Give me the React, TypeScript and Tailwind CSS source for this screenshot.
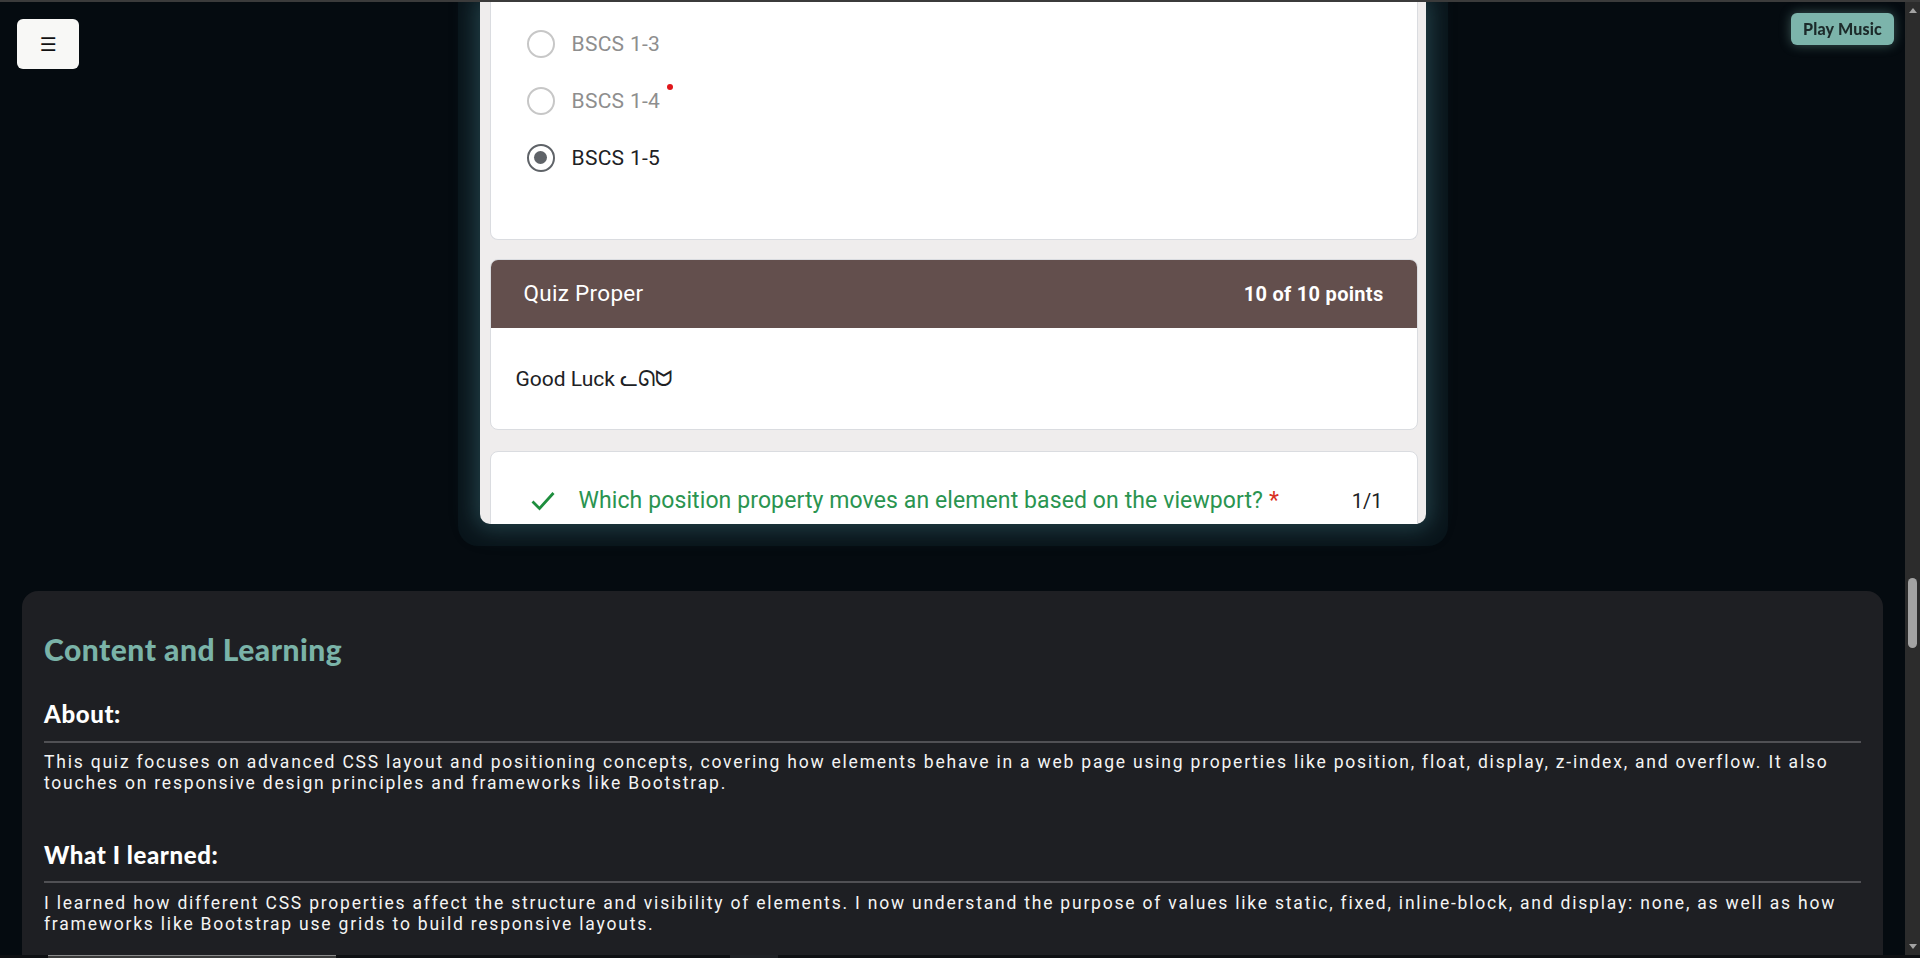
import React from "react";

function Radio({ label, selected, dot }: { label: string; selected?: boolean; dot?: boolean }) {
  return (
    <div className="flex h-[57px] items-center">
      <div
        className={
          selected
            ? "flex h-[28px] w-[28px] shrink-0 items-center justify-center rounded-full border-2 border-[#5f6368]"
            : "flex h-[28px] w-[28px] shrink-0 items-center justify-center rounded-full border-2 border-[#c7c7c7]"
        }
      >
        {selected && <div className="h-[13px] w-[13px] rounded-full bg-[#5f6368]" />}
      </div>
      <div className="ml-[17px] flex items-start">
        <span
          className={
            selected
              ? "text-[21px] leading-[28px] tracking-[0.3px] text-[#202124]"
              : "text-[21px] leading-[28px] tracking-[0.3px] text-[#8e8e8e]"
          }
        >
          {label}
        </span>
        {dot && <span className="ml-[7px] mt-[-3px] h-[6px] w-[6px] rounded-full bg-[#e0161b]" />}
      </div>
    </div>
  );
}

function QuizEmbed() {
  return (
    <div className="mx-auto w-[990px] rounded-b-[20px] bg-[#09141a] px-[22px] pb-[22px]">
      <div className="h-[522px] overflow-hidden rounded-b-[10px] bg-[#efeded] pl-[10px] pr-[8px] font-['Roboto','DejaVu_Sans',sans-serif] shadow-[0_0_22px_5px_rgba(55,100,110,0.55)]">
        <div className="rounded-b-[8px] border border-t-0 border-[#dadce0] bg-white pb-[53px] pl-[36px] pt-[13px]">
          <Radio label="BSCS 1-3" />
          <Radio label="BSCS 1-4" dot />
          <Radio label="BSCS 1-5" selected />
        </div>

        <div className="mt-[19px] overflow-hidden rounded-[8px] border border-[#dadce0] bg-white">
          <div className="flex h-[68px] items-center justify-between bg-[#634f4d] px-[33px] text-white">
            <span className="text-[22.5px] tracking-[0.3px]">Quiz Proper</span>
            <span className="text-[20px] font-bold tracking-[0.3px]">10 of 10 points</span>
          </div>
          <div className="flex h-[101px] items-center pl-[25px] pt-[3px] text-[21px] text-[#202124]">
            Good Luck ᓚᘏᗢ
          </div>
        </div>

        <div className="mt-[21px] h-[120px] rounded-t-[8px] border border-[#dadce0] bg-white pl-[40px] pr-[34px] pt-[34px]">
          <div className="flex items-center">
            <svg width="24" height="20" viewBox="0 0 24 20" className="shrink-0">
              <path d="M1.5 10.5 L8.5 17.5 L22.5 2" fill="none" stroke="#1e8e3e" strokeWidth="2.8" />
            </svg>
            <span className="ml-[24px] text-[23px] leading-[30px] tracking-[0.1px] text-[#2a9450]">
              Which position property moves an element based on the viewport?
              <span className="ml-[6px] text-[#d93025]">*</span>
            </span>
            <span className="ml-auto text-[20px] leading-[30px] text-[#202124]">1/1</span>
          </div>
        </div>
      </div>
    </div>
  );
}

function ContentCard() {
  return (
    <div className="mx-[22px] mt-[45px] rounded-[16px] bg-[#1e1f23] px-[22px] pb-[60px] pt-[42px]">
      <h2 className="font-['Lato',sans-serif] text-[30px] font-black leading-[33px] tracking-[0.5px] text-[#7ab3a8]">
        Content and Learning
      </h2>
      <h3 className="mt-[35px] font-['Lato',sans-serif] text-[24px] font-black leading-[26px] tracking-[0.6px] text-white">
        About:
      </h3>
      <div className="mt-[14px] h-[2px] bg-[#505054]" />
      <p className="mt-[9px] font-['Roboto',sans-serif] text-[17.5px] leading-[21px] tracking-[1.79px] text-[#f4f4f4]">
        This quiz focuses on advanced CSS layout and positioning concepts, covering how elements behave in a web page using
        properties like position, float, display, z-index, and overflow. It also touches on responsive design principles and
        frameworks like Bootstrap.
      </p>
      <h3 className="mt-[48px] font-['Lato',sans-serif] text-[24px] font-black leading-[26px] tracking-[0.6px] text-white">
        What I learned:
      </h3>
      <div className="mt-[13px] h-[2px] bg-[#505054]" />
      <p className="mt-[10px] font-['Roboto',sans-serif] text-[17.5px] leading-[20.5px] tracking-[1.79px] text-[#f4f4f4]">
        I learned how different CSS properties affect the structure and visibility of elements. I now understand the purpose of
        values like static, fixed, inline-block, and display: none, as well as how frameworks like Bootstrap use grids to build
        responsive layouts.
      </p>
    </div>
  );
}

function Scrollbar() {
  return (
    <div className="flex w-[15px] shrink-0 flex-col items-center bg-[#2c2c2c]">
      <div className="flex h-[17px] items-center justify-center">
        <svg width="8" height="5" viewBox="0 0 8 5">
          <path d="M0 5 L4 0 L8 5 Z" fill="#a3a3a3" />
        </svg>
      </div>
      <div className="flex-1 pt-[559px]">
        <div className="h-[70px] w-[9px] rounded-full bg-[#a3a3a3]" />
      </div>
      <div className="flex h-[17px] items-center justify-center">
        <svg width="8" height="5" viewBox="0 0 8 5">
          <path d="M0 0 L8 0 L4 5 Z" fill="#a3a3a3" />
        </svg>
      </div>
    </div>
  );
}

export default function App() {
  return (
    <div className="flex h-[958px] w-full flex-col overflow-hidden bg-[#050b10]">
      <div className="h-[2px] shrink-0 bg-[#3b3b3b]" />
      <div className="flex min-h-0 flex-1">
        <main className="min-w-0 flex-1 overflow-hidden">
          <QuizEmbed />
          <ContentCard />
        </main>
        <Scrollbar />
      </div>
      <div className="flex h-[3px] shrink-0 bg-[#0e1013]">
        <div className="ml-[48px] w-[288px] border-t border-[#8a8a8a] bg-[#3a3a3a]" />
        <div className="ml-[394px] w-[48px] bg-[#1f2125]" />
      </div>

      <button className="fixed left-[17px] top-[19px] flex h-[50px] w-[62px] items-center justify-center rounded-[6px] bg-[#f8f8f6] font-['DejaVu_Sans',sans-serif] text-[19px] text-[#111]">
        ☰
      </button>
      <button className="fixed right-[26px] top-[13px] flex h-[32px] w-[103px] items-center justify-center rounded-[6px] bg-[#7cb4ab] font-['Lato',sans-serif] text-[16px] font-black tracking-[0.2px] text-[#1c2a2a] shadow-[0_0_12px_rgba(124,180,171,0.45)]">
        Play Music
      </button>
    </div>
  );
}
